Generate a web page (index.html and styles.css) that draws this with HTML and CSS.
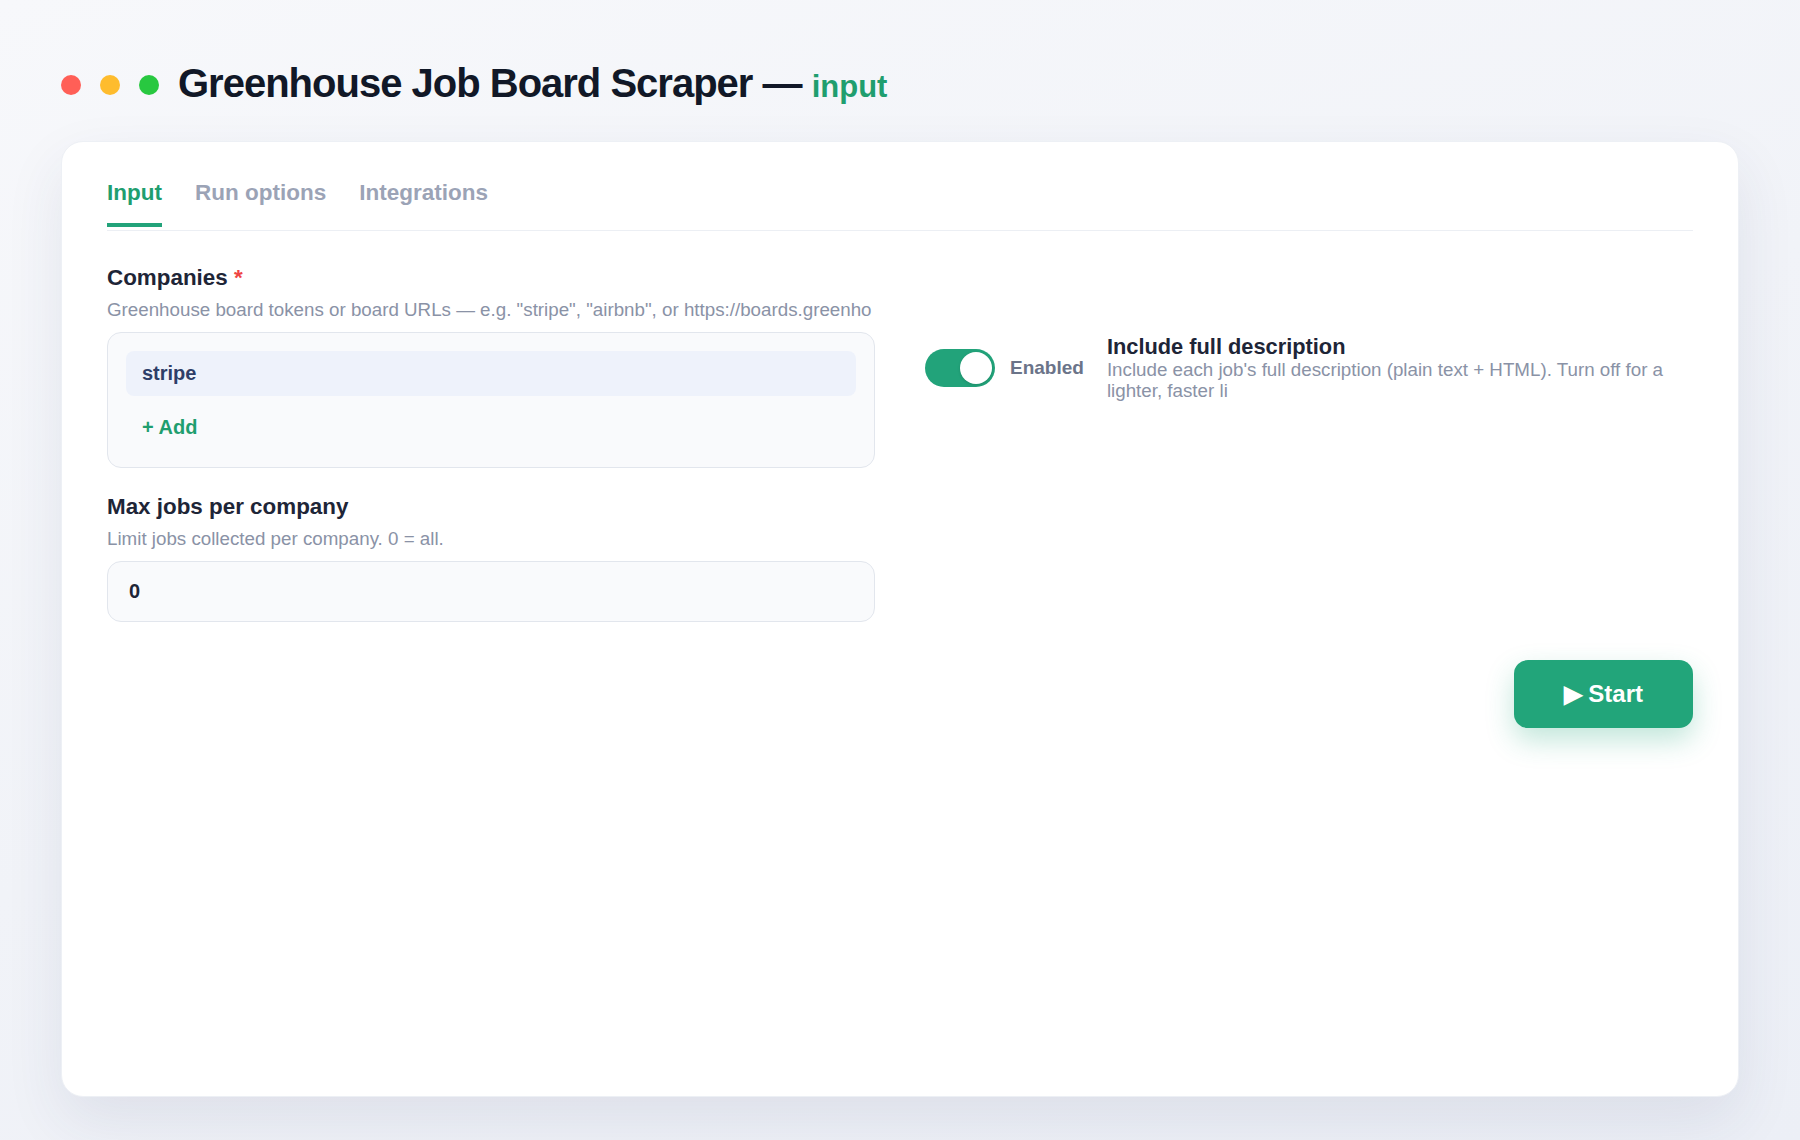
FILE: index.html
```html
<!DOCTYPE html>
<html>
<head>
    <meta name="viewport" content="width=device-width, initial-scale=1.0">
    <title>Greenhouse Job Board Scraper - Input</title>
    <link rel="stylesheet" href="styles.css">
</head>
<body>
    <div class="page">
        <div class="titlebar">
            <span class="dot dot-red"></span>
            <span class="dot dot-yellow"></span>
            <span class="dot dot-green"></span>
            <h1 class="title">Greenhouse Job Board Scraper — <span class="title-mode">input</span></h1>
        </div>

        <div class="card">
            <div class="tabs">
                <div class="tab tab-active">Input</div>
                <div class="tab">Run options</div>
                <div class="tab">Integrations</div>
            </div>

            <div class="form-grid">
                <div class="form-col">
                    <div class="field">
                        <div class="field-label">Companies <span class="required">*</span></div>
                        <div class="field-help">Greenhouse board tokens or board URLs — e.g. "stripe", "airbnb", or https://boards.greenho</div>
                        <div class="list-box">
                            <div class="list-item">stripe</div>
                            <button class="add-btn">+ Add</button>
                        </div>
                    </div>

                    <div class="field field-next">
                        <div class="field-label">Max jobs per company</div>
                        <div class="field-help">Limit jobs collected per company. 0 = all.</div>
                        <input class="text-input" type="text" value="0">
                    </div>
                </div>

                <div class="form-col form-col-side">
                    <div class="toggle-row">
                        <div class="toggle"><span class="toggle-knob"></span></div>
                        <span class="toggle-state">Enabled</span>
                        <div class="toggle-text">
                            <div class="toggle-title">Include full description</div>
                            <div class="toggle-help">Include each job's full description (plain text + HTML). Turn off for a lighter, faster li</div>
                        </div>
                    </div>
                </div>
            </div>

            <div class="actions">
                <button class="start-btn">▶ Start</button>
            </div>
        </div>
    </div>
</body>
</html>
```

FILE: styles.css
```css
* {
    box-sizing: border-box;
}

body {
    font-family: 'Liberation Sans', Arial, sans-serif;
    margin: 0;
    padding: 0;
    background: linear-gradient(160deg, #f7f8fb 0%, #f1f3f8 50%, #eceff6 100%);
    min-height: 100vh;
}

.page {
    display: flex;
    flex-direction: column;
    height: 100vh;
    padding: 61px 61px 43px;
}

.titlebar {
    display: flex;
    align-items: center;
    gap: 19px;
    height: 48px;
    margin-bottom: 32px;
}

.dot {
    width: 20px;
    height: 20px;
    border-radius: 50%;
    flex-shrink: 0;
}

.dot-red { background: #ff5f57; }
.dot-yellow { background: #febc2e; }
.dot-green { background: #28c840; }

.title {
    margin: 0;
    font-size: 40px;
    line-height: 48px;
    font-weight: bold;
    letter-spacing: -1px;
    color: #111827;
}

.title-mode {
    font-size: 31px;
    letter-spacing: 0;
    color: #1f9e6f;
}

.card {
    flex: 1;
    background: #fff;
    border: 1px solid #edf0f5;
    border-radius: 22px;
    padding: 38px 45px;
    box-shadow: 0 24px 60px rgba(40, 55, 100, 0.09);
}

.tabs {
    display: flex;
    gap: 33px;
    padding-bottom: 3px;
    border-bottom: 1px solid #eceff4;
}

.tab {
    font-size: 22.5px;
    line-height: 26px;
    font-weight: bold;
    color: #9ba3b6;
    padding-bottom: 17px;
    border-bottom: 4px solid transparent;
}

.tab-active {
    color: #1f9e6f;
    border-bottom-color: #22a37a;
}

.form-grid {
    display: grid;
    grid-template-columns: 1fr 1fr;
    column-gap: 50px;
    margin-top: 34px;
}

.field-next {
    margin-top: 26px;
}

.field-label {
    font-size: 22.4px;
    line-height: 26px;
    font-weight: bold;
    color: #1e2537;
    margin-bottom: 8px;
}

.required {
    color: #ef4444;
}

.field-help {
    font-size: 18.75px;
    line-height: 22px;
    color: #8a92a6;
    white-space: nowrap;
    overflow: hidden;
    margin-bottom: 11px;
}

.list-box {
    background: #f9fafc;
    border: 1px solid #e2e6ed;
    border-radius: 14px;
    padding: 18px;
}

.list-item {
    background: #eef2fb;
    border-radius: 8px;
    padding: 0 16px;
    font-size: 20px;
    line-height: 45px;
    font-weight: bold;
    color: #2e3e68;
}

.add-btn {
    display: block;
    margin-top: 10px;
    padding: 10px 16px;
    border: none;
    background: none;
    font-family: inherit;
    font-size: 20px;
    line-height: 23px;
    font-weight: bold;
    color: #1f9e6f;
    cursor: pointer;
}

.text-input {
    display: block;
    width: 100%;
    height: 61px;
    padding: 0 21px;
    background: #f9fafc;
    border: 1px solid #e2e6ed;
    border-radius: 14px;
    font-family: inherit;
    font-size: 20px;
    font-weight: bold;
    color: #1e2537;
    outline: none;
}

.form-col-side {
    padding-top: 70px;
}

.toggle-row {
    display: flex;
    align-items: center;
    gap: 15px;
}

.toggle {
    position: relative;
    width: 70px;
    height: 38px;
    border-radius: 19px;
    background: #22a37a;
    flex-shrink: 0;
}

.toggle-knob {
    position: absolute;
    top: 3px;
    right: 3px;
    width: 32px;
    height: 32px;
    border-radius: 50%;
    background: #fff;
    box-shadow: 0 1px 3px rgba(0, 0, 0, 0.15);
}

.toggle-state {
    font-size: 19px;
    font-weight: bold;
    color: #6b7489;
    margin-right: 8px;
}

.toggle-title {
    font-size: 21.8px;
    line-height: 24px;
    font-weight: bold;
    color: #1e2537;
}

.toggle-help {
    font-size: 18.75px;
    line-height: 21px;
    color: #8a92a6;
}

.actions {
    display: flex;
    justify-content: flex-end;
    margin-top: 38px;
}

.start-btn {
    padding: 20px 50px;
    border: none;
    border-radius: 14px;
    background: #22a57a;
    color: #fff;
    font-family: inherit;
    font-size: 24px;
    line-height: 28px;
    font-weight: bold;
    cursor: pointer;
    box-shadow: 0 12px 28px rgba(34, 165, 122, 0.28);
}
```
